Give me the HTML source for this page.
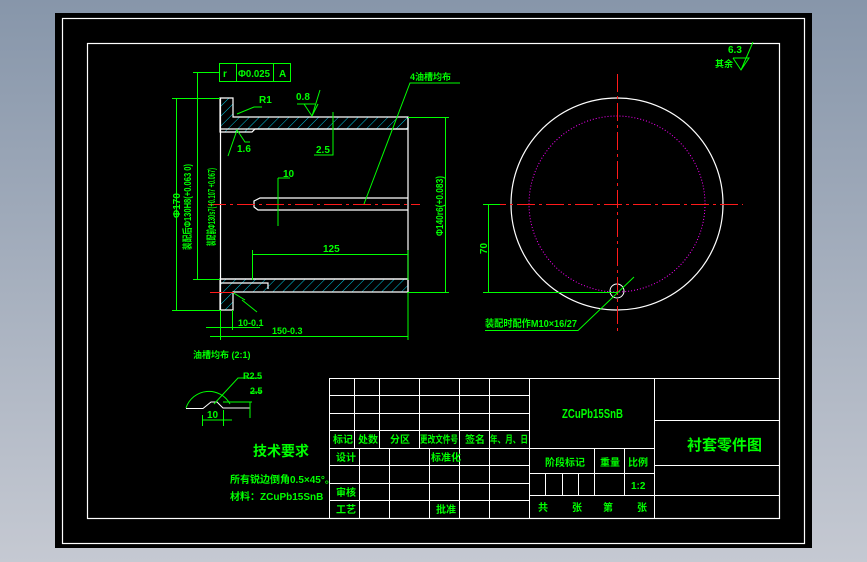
<!DOCTYPE html>
<html><head><meta charset="utf-8"><style>
html,body{margin:0;padding:0;width:867px;height:562px;overflow:hidden;background:linear-gradient(#8796aa,#c5c9d2);}
svg{position:absolute;left:0;top:0}
text{font-family:"Liberation Sans","Noto Sans CJK SC",sans-serif;font-weight:bold;fill:#00ff00}
</style></head><body>
<svg width="867" height="562" viewBox="0 0 867 562" xmlns="http://www.w3.org/2000/svg">
<defs>
<pattern id="h" width="7" height="7" patternUnits="userSpaceOnUse" patternTransform="rotate(45)">
<line x1="0" y1="0" x2="0" y2="7" stroke="#00c8e0" stroke-width="1"/></pattern>
</defs>
<rect x="55" y="13" width="757" height="535" fill="#000"/>
<g fill="none" stroke="#fff" stroke-width="1.2">
<rect x="62.5" y="18.5" width="742" height="525"/>
<rect x="87.5" y="43.5" width="692" height="475"/>
</g>
<!-- title block -->
<g stroke="#fff" stroke-width="1" fill="none">
<line x1="329" y1="378.5" x2="779" y2="378.5"/>
<line x1="329.5" y1="378" x2="329.5" y2="518"/>
<line x1="529.5" y1="378" x2="529.5" y2="518"/>
<line x1="654.5" y1="378" x2="654.5" y2="518"/>
<path d="M329 395.5H529M329 413.5H529M329 430.5H529M329 448.5H529M329 465.5H529M329 483.5H529M329 500.5H529"/>
<path d="M354.5 378V448M379.5 378V448M419.5 378V448M459.5 378V448M489.5 378V448"/>
<path d="M359.5 448V518M389.5 448V518M429.5 448V518M459.5 448V518M489.5 448V518"/>
<path d="M529 448.5H654M529 473.5H654M529 495.5H654"/>
<path d="M545.5 473V495M562.5 473V495M578.5 473V495M594.5 448V495M624.5 448V495"/>
<path d="M654 420.5H779M654 465.5H779M654 495.5H779"/>
</g>
<g font-size="10">
<text x="333" y="443">标记</text><text x="358" y="443">处数</text><text x="390" y="443">分区</text>
<text x="420" y="443" textLength="38" lengthAdjust="spacingAndGlyphs">更改文件号</text>
<text x="465" y="443">签名</text><text x="490" y="443" textLength="38" lengthAdjust="spacingAndGlyphs">年、月、日</text>
<text x="336" y="461">设计</text><text x="431" y="461">标准化</text>
<text x="336" y="496">审核</text><text x="336" y="513">工艺</text><text x="436" y="513">批准</text>
<text x="545" y="466">阶段标记</text><text x="600" y="466">重量</text><text x="628" y="466">比例</text>
<text x="631" y="489">1:2</text>
<text x="538" y="511">共</text><text x="572" y="511">张</text><text x="603" y="511">第</text><text x="637" y="511">张</text>
</g>
<text x="562" y="418" font-size="13" textLength="61" lengthAdjust="spacingAndGlyphs">ZCuPb15SnB</text>
<text x="687" y="450" font-size="15">衬套零件图</text>
<!-- main view -->
<g stroke="#fff" stroke-width="1.2">
<path d="M220 98H233V117H408V129H255L252 132H220Z" fill="url(#h)"/>
<path d="M220 279H408V292H233V310H220Z" fill="url(#h)"/>
<path d="M220.5 98V310M408 117V292" fill="none"/>
<path d="M220 129H408M220 279H408" fill="none"/>
<path d="M408 198H260L254 201V207L258 210H408" fill="none"/>
<path d="M233 283H268V289M220 283H233" fill="none"/>
</g>
<g stroke="#00ff00" stroke-width="1" fill="none">
<path d="M172 98.5H220M172 310.5H220M176.5 98V310"/>
<path d="M193 72.5H219M197.5 72V279M193 279.5H220"/>
<rect x="219.5" y="63.5" width="71" height="18"/><path d="M236.5 63V81M273.5 63V81"/>
<path d="M408 117.5H449M408 292.5H449M445.5 117V292"/>
<path d="M252 254.5H408M252.5 250V280M408 250V280"/>
<path d="M210 336.5H408M220.5 310V340M408 292V340"/>
<path d="M206 327.5H260M232.5 310V330"/>
<path d="M237 114L254 107H262"/>
<path d="M297 104L315 104M304 104L312 116L318 104M320 90L312 116"/>
<path d="M228 156L237 130L245 142H250"/>
<path d="M333 112V155H314"/>
<path d="M278 178V226M278 178H290"/>
<path d="M364 204L410 83H460"/>
<path d="M232 292L245 300M242 300L257 312"/>
</g>
<line x1="208" y1="204.5" x2="420" y2="204.5" stroke="#ff1a1a" stroke-dasharray="18,4,3,4"/>
<line x1="210" y1="292.5" x2="234" y2="292.5" stroke="#ff1a1a"/>
<g font-size="10">
<text x="223" y="77">r</text><text x="238" y="77" textLength="32" lengthAdjust="spacingAndGlyphs">Φ0.025</text><text x="279" y="77">A</text>
<text x="259" y="103">R1</text><text x="296" y="100">0.8</text>
<text x="237" y="152">1.6</text><text x="316" y="153">2.5</text>
<text x="283" y="177">10</text><text x="323" y="252">125</text>
<text x="238" y="326" font-size="9">10-0.1</text>
<text x="272" y="334" font-size="9">150-0.3</text>
<text x="410" y="80" font-size="9">4油槽均布</text>
<text x="728" y="53">6.3</text><text x="715" y="67" font-size="9">其余</text>
</g>
<path d="M733 58H749L741 70L733 58M741 70L753 42" stroke="#00ff00" fill="none"/>
<g font-size="10">
<text transform="translate(180,218) rotate(-90)">Φ170</text>
<text transform="translate(191,250) rotate(-90)" textLength="86" lengthAdjust="spacingAndGlyphs">装配后Φ130H8(+0.063 0)</text>
<text transform="translate(215,246) rotate(-90)" textLength="78" lengthAdjust="spacingAndGlyphs">装配前Φ130s7(+0.107 +0.067)</text>
<text transform="translate(443,236) rotate(-90)" textLength="60" lengthAdjust="spacingAndGlyphs">Φ140r6(+0.083)</text>
<text transform="translate(487,254) rotate(-90)">70</text>
</g>
<!-- circle view -->
<circle cx="617" cy="204" r="106" fill="none" stroke="#fff" stroke-width="1.2"/>
<circle cx="617" cy="204" r="88" fill="none" stroke="#ff00ff" stroke-dasharray="1,2"/>
<circle cx="617" cy="291" r="7" fill="none" stroke="#fff"/>
<path d="M488 204.5H743M617.5 74V335" stroke="#ff1a1a" stroke-dasharray="18,4,3,4"/>
<path d="M483 204.5H500M483 292.5H617M488.5 204V292M485 330.5H578L634 277" stroke="#00ff00" fill="none"/>
<text x="485" y="327" font-size="10" textLength="92" lengthAdjust="spacingAndGlyphs">装配时配作M10×16/27</text>
<!-- detail -->
<path d="M186 408A24 24 0 0 1 230 404" stroke="#00ff00" fill="none"/>
<path d="M186 408.5H203L211 402H217L223 408H250" stroke="#fff" fill="none"/>
<path d="M223 402H252M250 402V418M202 420H232M202.5 415V426M223.5 410V426M214 404L238 378H262M250 392H262" stroke="#00ff00" fill="none"/>
<text x="193" y="358" font-size="9">油槽均布 (2:1)</text>
<text x="243" y="379" font-size="9">R2.5</text><text x="250" y="394" font-size="9">2.5</text>
<text x="207" y="418" font-size="10">10</text>
<text x="253" y="456" font-size="14">技术要求</text>
<text x="230" y="483" font-size="10">所有锐边倒角0.5×45°。</text>
<text x="230" y="500" font-size="10">材料：ZCuPb15SnB</text>
</svg>
</body></html>
